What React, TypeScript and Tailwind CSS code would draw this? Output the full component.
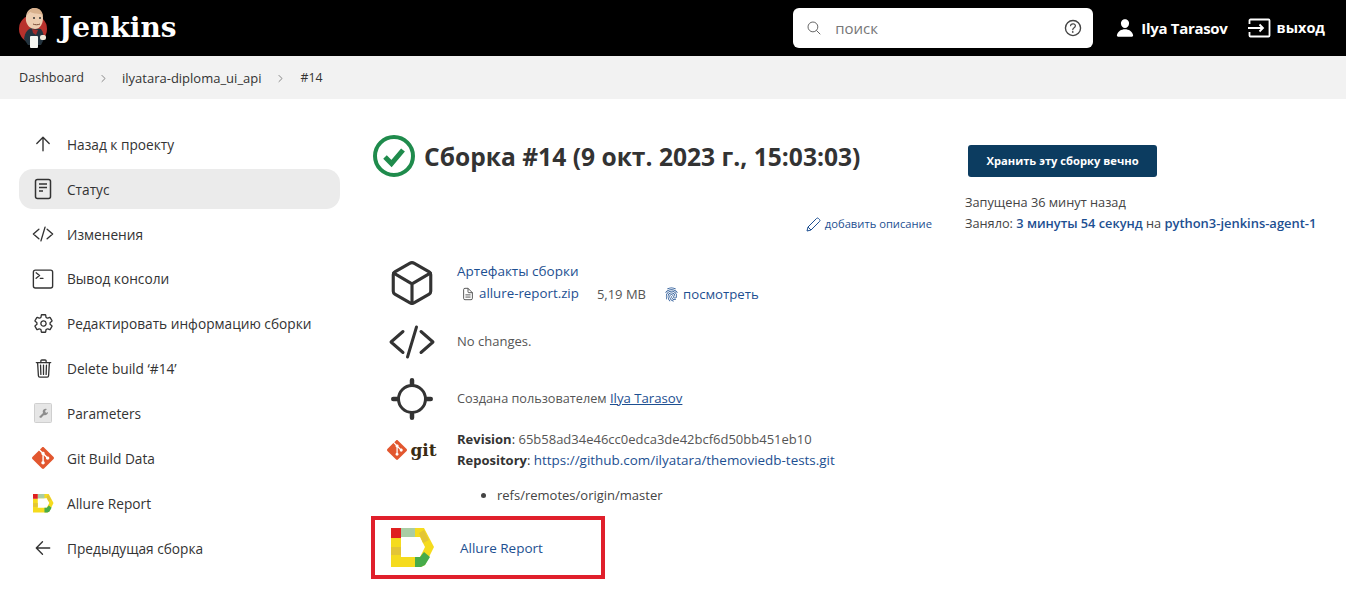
import type { ReactNode } from 'react';
import {
  IoArrowBackOutline,
  IoArrowUpOutline,
  IoChevronForward,
  IoCodeSlashOutline,
  IoCubeOutline,
  IoDocumentTextOutline,
  IoFingerPrintOutline,
  IoHelpCircleOutline,
  IoLocateOutline,
  IoPerson,
  IoSearchOutline,
  IoSettingsOutline,
  IoTerminalOutline,
  IoTrashOutline,
} from 'react-icons/io5';
import { SiGit } from 'react-icons/si';

const FONT = "font-['Open_Sans','Noto_Sans',sans-serif]";
const LINK = 'text-[#1d4f91]';

function JenkinsLogo() {
  return (
    <svg width="32" height="42" viewBox="0 0 32 42">
      <circle cx="15" cy="22" r="14" fill="#b8312c" />
      <path d="M6 32c1-7 4-11 9-11l8 1c2 3 3 6 3 10l-3 6H10z" fill="#24343f" />
      <path d="M8 14c-1-8 3-13 8-13s9 4 9 10c0 6-3 11-8 11-4 0-8-3-9-8z" fill="#edcdb0" />
      <path d="M9 8c1-4 4-7 8-7 5 0 8 4 8 9l-2-3c-4 0-9-1-11-2z" fill="#d8b08c" />
      <path d="M14 22l6 1-2 5-3-2z" fill="#a02c2b" />
      <rect x="12" y="29" width="8" height="12" rx="1" fill="#f5f5f0" />
      <rect x="22" y="28" width="6" height="5" rx="2" fill="#efe6d8" />
      <circle cx="16" cy="11" r="1" fill="#333" />
      <circle cx="22" cy="11" r="1" fill="#333" />
      <path d="M15 17c2 1 5 1 7 0" stroke="#7a4a35" strokeWidth="1" fill="none" />
    </svg>
  );
}

function AllureLogo({ size }: { size: number }) {
  return (
    <svg width={size} height={size * 0.91} viewBox="0 0 44 40">
      <path d="M10 0h23l10 19-9 18-4 2H0V10h10v19h19l5-10-5-10H10z" fill="#f5db1e" />
      <path d="M28 5l5-3 5 10-6 3z" fill="#e3c536" />
      <rect x="10" y="0" width="14" height="9" fill="#a9cda4" />
      <rect x="0" y="0" width="10" height="10" fill="#df1f1f" />
      <rect x="0" y="19" width="10" height="8" fill="#e3c536" />
      <path d="M24 29h5l4-5 6 5-5 8-4 2h-6z" fill="#47ab4a" />
    </svg>
  );
}

function ParamsIcon() {
  return (
    <svg width="18" height="20" viewBox="0 0 18 20">
      <rect x="0.5" y="0.5" width="17" height="19" rx="1" fill="#e6e6e6" stroke="#cfcfcf" />
      <path d="M5 14l4-4a3 3 0 0 1 4-4l-2 2 1 2 2-1a3 3 0 0 1-4 3l-3 3z" fill="#8d8d8d" />
    </svg>
  );
}

function StatusIcon() {
  return (
    <svg width="18" height="22" viewBox="0 0 18 22" fill="none" stroke="#333" strokeWidth="1.5">
      <rect x="1.5" y="1.5" width="15" height="19" rx="2" />
      <path d="M5 6h8M5 9.5h8M5 13h4" />
    </svg>
  );
}

function ExitIcon() {
  return (
    <svg width="23" height="20" viewBox="0 0 23 20" fill="none" stroke="#fff" strokeWidth="1.8">
      <path d="M1.5 6V2.5a1 1 0 0 1 1-1h18a1 1 0 0 1 1 1v15a1 1 0 0 1-1 1h-18a1 1 0 0 1-1-1V14" />
      <path d="M0 10h15M11.5 6.5L15 10l-3.5 3.5" />
    </svg>
  );
}

function PencilIcon() {
  return (
    <svg width="15" height="15" viewBox="0 0 15 15" fill="none" stroke="#1d4f91" strokeWidth="1">
      <path d="M1 14l1-4 8.5-8.5a1.4 1.4 0 0 1 2 0l1 1a1.4 1.4 0 0 1 0 2L5 13z" />
      <path d="M2 10l3 3" />
    </svg>
  );
}

const THIN = '[&_path]:[stroke-width:32px]';

const sideItems: { icon: ReactNode; label: string; active?: boolean }[] = [
  { icon: <IoArrowUpOutline size={22} className={THIN} />, label: 'Назад к проекту' },
  { icon: <StatusIcon />, label: 'Статус', active: true },
  { icon: <IoCodeSlashOutline size={22} className={THIN} />, label: 'Изменения' },
  { icon: <IoTerminalOutline size={22} />, label: 'Вывод консоли' },
  { icon: <IoSettingsOutline size={21} />, label: 'Редактировать информацию сборки' },
  { icon: <IoTrashOutline size={21} />, label: 'Delete build ‘#14’' },
  { icon: <ParamsIcon />, label: 'Parameters' },
  { icon: <SiGit size={22} color="#e2572f" />, label: 'Git Build Data' },
  { icon: <AllureLogo size={21} />, label: 'Allure Report' },
  { icon: <IoArrowBackOutline size={22} className={THIN} />, label: 'Предыдущая сборка' },
];

function Row({ icon, children, className }: { icon: ReactNode; children: ReactNode; className: string }) {
  return (
    <div className={`flex items-center ${className}`}>
      <div className="mr-[6px] flex w-[78px] shrink-0 justify-center text-[#333]">{icon}</div>
      <div>{children}</div>
    </div>
  );
}

export default function App() {
  return (
    <div className={`h-[602px] w-[1346px] overflow-hidden bg-white text-[13px] text-[#333] ${FONT}`}>
      {/* Header */}
      <header className="flex h-[56px] items-center bg-black pl-[18px] pr-[21px] text-white">
        <JenkinsLogo />
        <span className="ml-[9px] font-['DejaVu_Serif',serif] text-[28px] font-bold leading-none">Jenkins</span>
        <div className="ml-auto flex h-[40px] w-[300px] items-center rounded-md bg-white pl-[13px] pr-[9px] text-[#666]">
          <IoSearchOutline size={16} />
          <span className="ml-[13px] text-[15px] text-[#777]">поиск</span>
          <IoHelpCircleOutline size={22} className="ml-auto text-[#444]" />
        </div>
        <IoPerson size={20} className="ml-[22px]" />
        <span className="ml-[6px] text-[15px] font-bold tracking-[-0.3px]">Ilya Tarasov</span>
        <span className="ml-[20px]"><ExitIcon /></span>
        <span className="ml-[6px] text-[14.5px] font-bold">выход</span>
      </header>

      {/* Breadcrumbs */}
      <nav className="flex h-[43px] items-center bg-[#f2f2f2] pl-[19px] pt-[2px] text-[#333]">
        <span className="text-[12.6px]">Dashboard</span>
        <IoChevronForward size={11} className="ml-[14px] mr-[13px] text-[#777] [&_path]:[stroke-width:40px]" />
        <span>ilyatara-diploma_ui_api</span>
        <IoChevronForward size={11} className="ml-[13px] mr-[15px] text-[#777] [&_path]:[stroke-width:40px]" />
        <span className="text-[12.3px]">#14</span>
      </nav>

      <div className="flex">
        {/* Sidebar */}
        <aside className="ml-[19px] mt-[25px] flex w-[321px] shrink-0 flex-col gap-[4.9px]">
          {sideItems.map((item) => (
            <div
              key={item.label}
              className={`flex h-[40px] items-center rounded-[14px] ${item.active ? 'bg-[#ebebeb]' : ''}`}
            >
              <div className="flex w-[48px] shrink-0 justify-center text-[#333]">{item.icon}</div>
              <span className="pt-[2px] text-[13.7px]">{item.label}</span>
            </div>
          ))}
        </aside>

        {/* Build summary */}
        <main className="ml-[33px] w-[560px] shrink-0">
          <div className="mt-[36px] flex items-center">
            <svg width="42" height="42" viewBox="0 0 42 42" fill="none">
              <circle cx="21" cy="21" r="19" stroke="#1f8b4c" strokeWidth="4" />
              <path d="M12 22l6.5 6.5L30 15" stroke="#1f8b4c" strokeWidth="5" />
            </svg>
            <h1 className="ml-[9px] mt-[2px] text-[24.6px] font-bold leading-none text-[#333]">
              Сборка #14 (9 окт. 2023 г., 15:03:03)
            </h1>
          </div>

          <div className={`mr-[1px] mt-[39px] flex items-center justify-end text-[11.2px] ${LINK}`}>
            <PencilIcon />
            <span className="ml-[4px]">добавить описание</span>
          </div>

          <Row icon={<IoCubeOutline size={50} />} className="mt-[25px]">
            <div className={`text-[13.5px] ${LINK}`}>Артефакты сборки</div>
            <div className="mt-[3px] flex items-center">
              <IoDocumentTextOutline size={14} className="ml-[4px] text-[#444]" />
              <span className={`ml-[4px] text-[13.3px] ${LINK}`}>allure-report.zip</span>
              <span className="ml-[18px] text-[#555]">5,19 MB</span>
              <IoFingerPrintOutline size={15} className={`ml-[18px] ${LINK}`} />
              <span className={`ml-[4px] text-[13.2px] ${LINK}`}>посмотреть</span>
            </div>
          </Row>
          <Row icon={<IoCodeSlashOutline size={48} />} className="mt-[10px]">
            <span className="text-[#555]">No changes.</span>
          </Row>
          <Row icon={<IoLocateOutline size={48} />} className="mt-[9px]">
            <span className="text-[12.7px] text-[#555]">Создана пользователем </span>
            <span className={`text-[13.2px] underline ${LINK}`}>Ilya Tarasov</span>
          </Row>
          <Row
            icon={
              <div className="flex items-center gap-[3px]">
                <SiGit size={20} color="#e2572f" />
                <span className="font-['DejaVu_Serif',serif] text-[17px] font-bold leading-none text-[#3a2c14]">git</span>
              </div>
            }
            className="mt-[7px]"
          >
            <div>
              <b className="font-bold">Revision</b>: <span className="text-[#555]">65b58ad34e46cc0edca3de42bcf6d50bb451eb10</span>
            </div>
            <div className="mt-[1px]">
              <b className="font-bold">Repository</b>: <span className={`text-[13.45px] ${LINK}`}>https://github.com/ilyatara/themoviedb-tests.git</span>
            </div>
          </Row>
          <ul className="ml-[124px] mt-[15px] list-disc text-[#444]">
            <li>refs/remotes/origin/master</li>
          </ul>
          <div className="-ml-[2px] mt-[11px] flex h-[63px] w-[234px] items-center border-4 border-[#e01f2b] pl-[16px]">
            <AllureLogo size={44} />
            <span className={`ml-[25px] text-[13.5px] ${LINK}`}>Allure Report</span>
          </div>
        </main>

        {/* Right column */}
        <section className="ml-[32px] mt-[46px] text-[12.75px] text-[#444]">
          <div className="ml-[3px] flex h-[32px] w-[189px] items-center justify-center rounded-[3px] bg-[#0c3c60] text-[11.2px] font-bold text-white">
            Хранить эту сборку вечно
          </div>
          <div className="mt-[15px] leading-[21px]">Запущена 36 минут назад</div>
          <div className="leading-[21px]">
            Заняло: <span className={`font-semibold ${LINK}`}>3 минуты 54 секунд</span> на{' '}
            <span className={`text-[12.95px] font-semibold ${LINK}`}>python3-jenkins-agent-1</span>
          </div>
        </section>
      </div>
    </div>
  );
}
